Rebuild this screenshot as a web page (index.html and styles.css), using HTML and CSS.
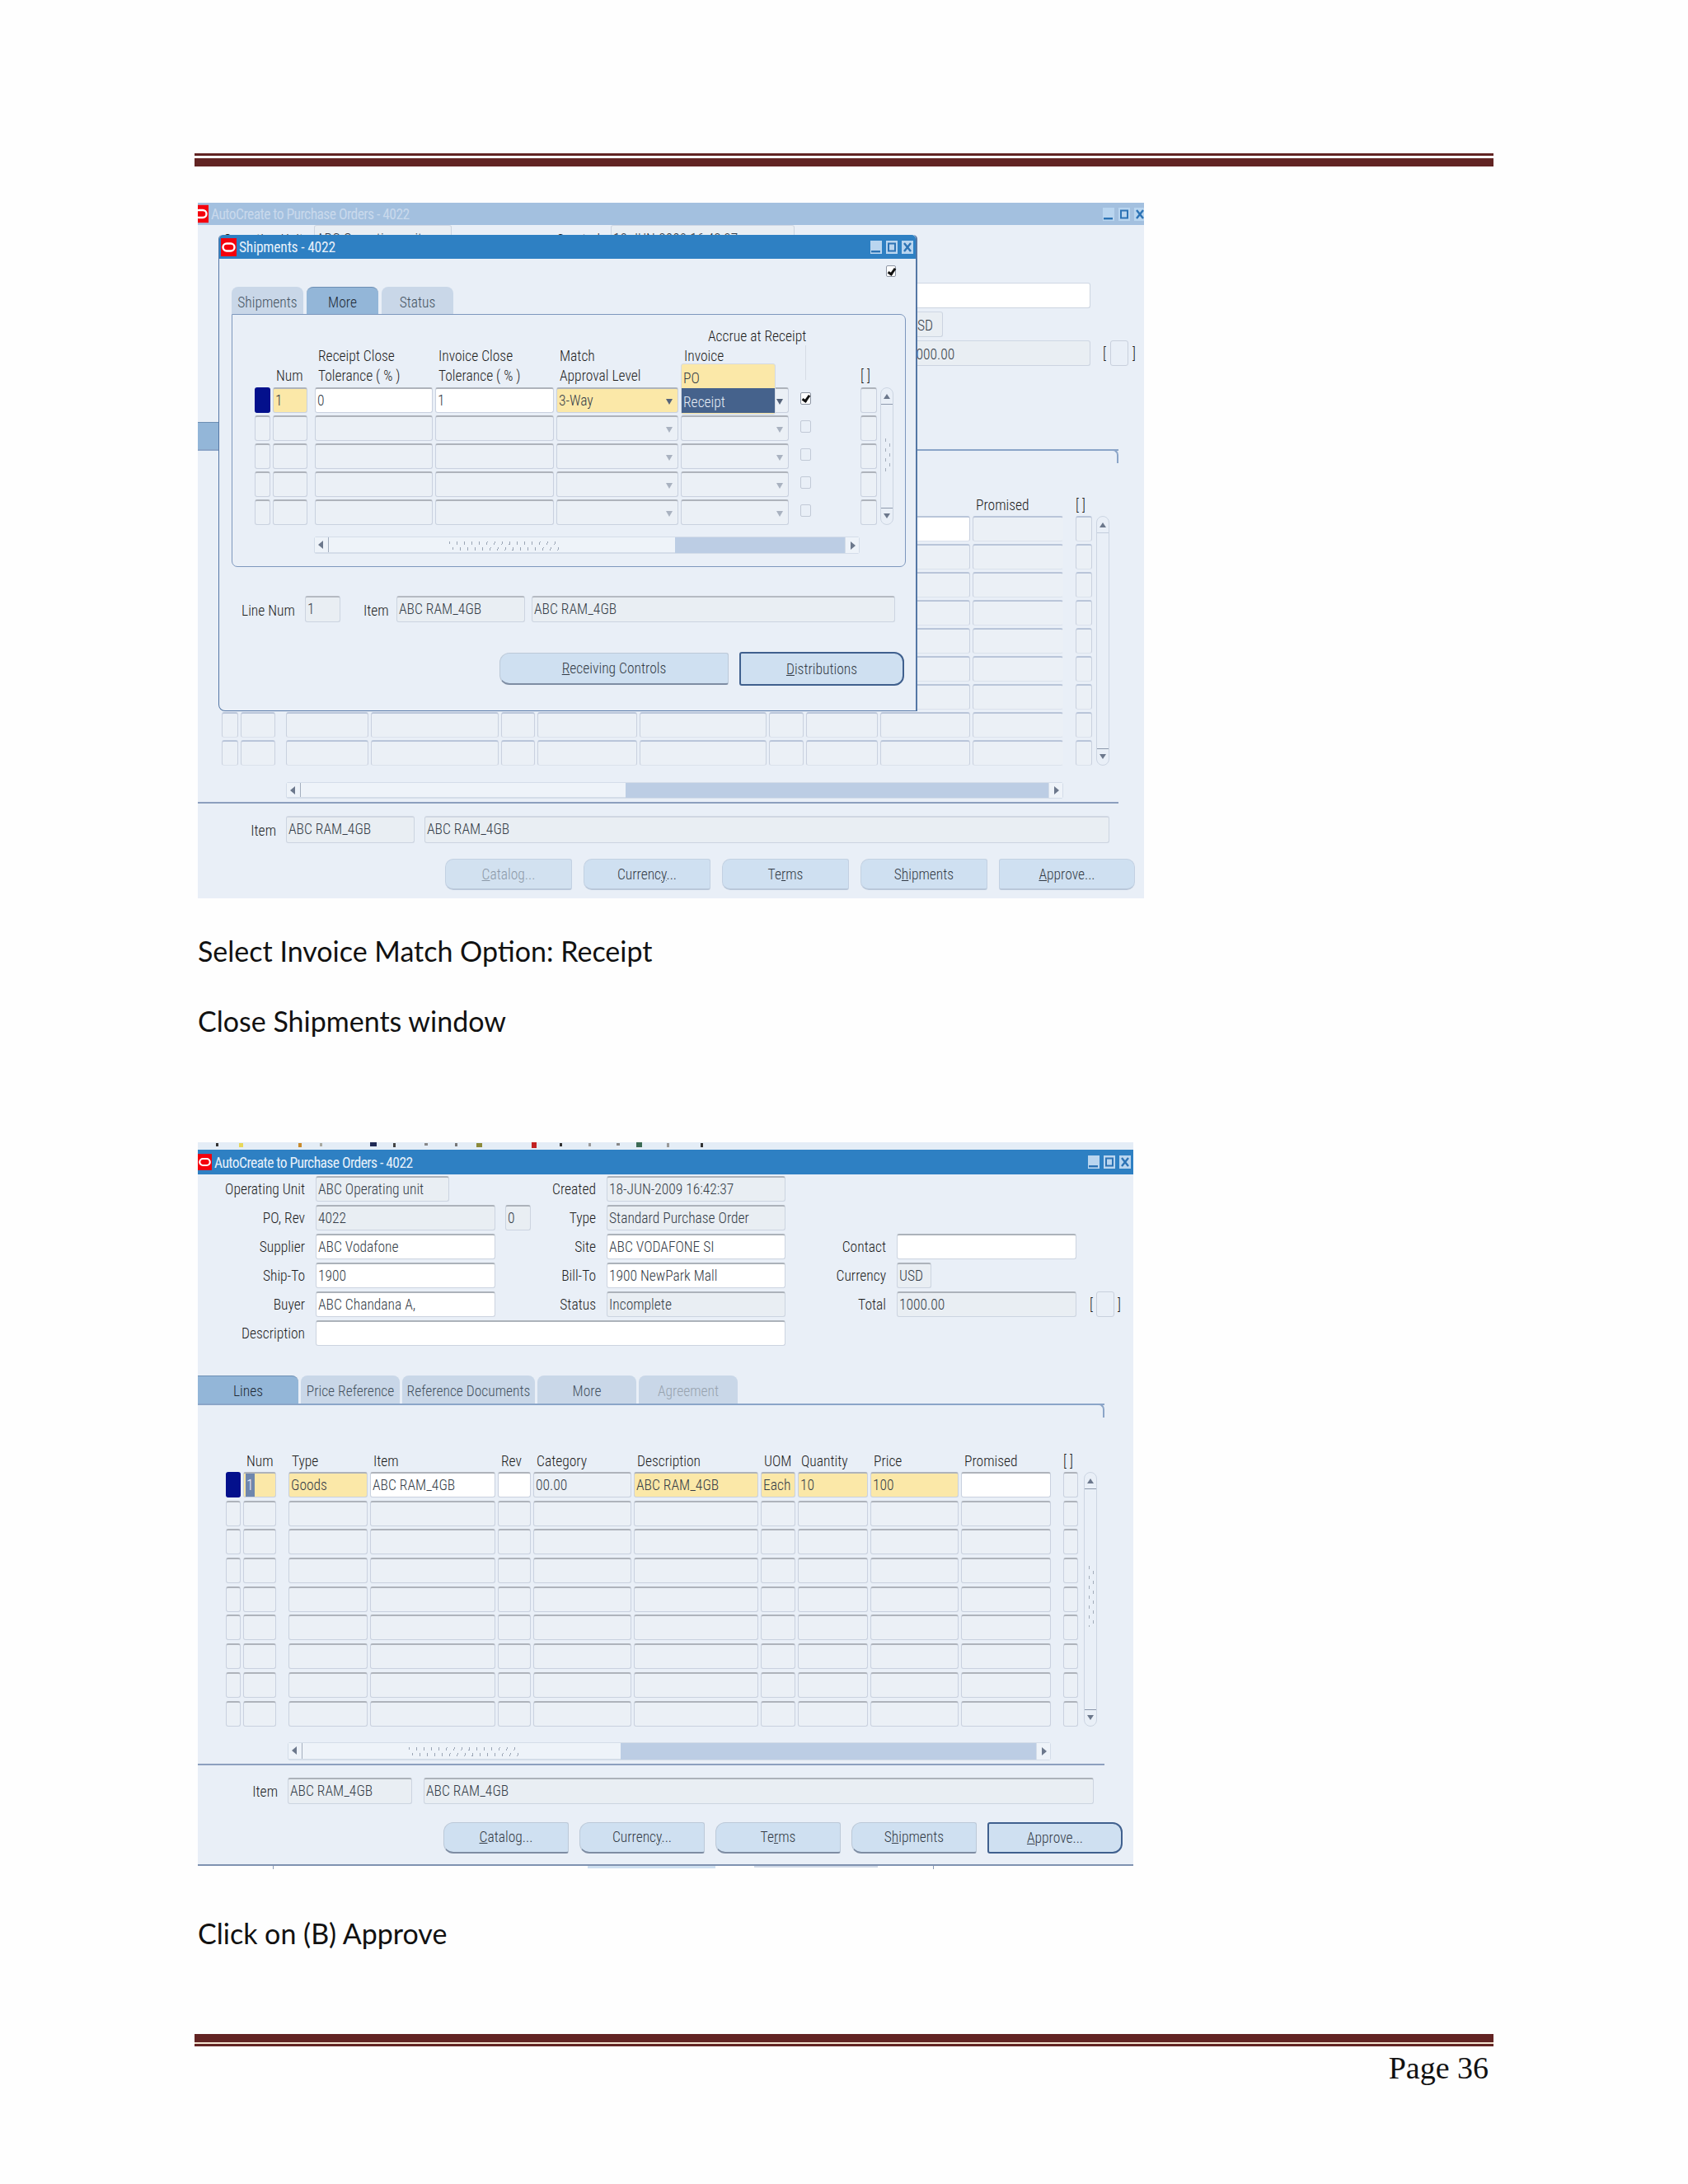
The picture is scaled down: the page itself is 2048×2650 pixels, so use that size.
FILE: index.html
```html
<!DOCTYPE html>
<html lang="en">
<head>
    <meta charset="UTF-8">
    <title>Page 36</title>
    <link rel="stylesheet" href="styles.css">
</head>
<body>
<svg class="defs" width="0" height="0">
    <symbol id="ora" viewBox="0 0 19 22">
        <rect width="19" height="22" fill="#f4000c"/>
        <rect x="2.5" y="6.5" width="14" height="9" rx="4.5" fill="none" stroke="#fff" stroke-width="2.4"/>
    </symbol>
    <symbol id="win-min" viewBox="0 0 14 16">
        <rect width="14" height="16" fill="#b9d5ef"/>
        <rect x="1" y="12" width="11" height="2.4" fill="#2c73b5"/>
    </symbol>
    <symbol id="win-max" viewBox="0 0 14 16">
        <rect width="14" height="16" fill="#b9d5ef"/>
        <rect x="3" y="3.5" width="8" height="9" fill="none" stroke="#2c73b5" stroke-width="2"/>
    </symbol>
    <symbol id="win-close" viewBox="0 0 14 16">
        <rect width="14" height="16" fill="#b9d5ef"/>
        <path d="M3 3 L11 13 M11 3 L3 13" stroke="#2c73b5" stroke-width="2.4"/>
    </symbol>
</svg>

<div class="page">
    <div class="rule rule-top"><div class="thin"></div><div class="thick"></div></div>

    <!-- first screenshot: shipments dialog over the PO window -->
    <div class="shot shot-one">
        <div class="titlebar faded">
            <svg class="logo-cut" viewBox="6 0 13 22"><use href="#ora" width="19" height="22"/></svg>
            <span class="title-text">AutoCreate to Purchase Orders - 4022</span>
            <div class="win-btns">
                <svg class="wbtn"><use href="#win-min"/></svg>
                <svg class="wbtn"><use href="#win-max"/></svg>
                <svg class="wbtn"><use href="#win-close"/></svg>
            </div>
        </div>

        <div class="form form-back">
            <label class="c1">Operating Unit</label>
            <div class="field ro c2 short">ABC Operating unit</div>
            <label class="c4">Created</label>
            <div class="field ro c5">18-JUN-2009 16:42:37</div>

            <div class="field ro c2"></div>
            <div class="field ro c5"></div>

            <div class="field white c2"></div>
            <div class="field white c5"></div>
            <div class="field white c7"></div>

            <div class="field white c2"></div>
            <div class="field white c5"></div>
            <div class="field ro c7 tiny">USD</div>

            <div class="field white c2"></div>
            <div class="field ro c5"></div>
            <div class="field ro c7">1000.00</div>
            <div class="bracket c8">[<span class="box"></span>]</div>

            <div class="field white c2 span-desc"></div>
        </div>

        <div class="tabs tabs-back">
            <div class="tab active lines-tab"></div>
        </div>
        <div class="panel panel-back">
            <div class="thead back-cols">
                <span></span><span></span><span></span><span></span><span></span><span></span><span></span><span></span><span></span><span></span>
                <span>Promised</span>
                <span class="th-end">[ ]</span>
            </div>
            <div class="table-wrap">
                <div class="cells back-cols">
                    <span class="cell"></span><span class="cell"></span><span class="cell"></span><span class="cell"></span><span class="cell"></span><span class="cell"></span><span class="cell"></span><span class="cell"></span><span class="cell"></span><span class="cell white"></span><span class="cell"></span><span class="cell"></span>
                    <span class="cell"></span><span class="cell"></span><span class="cell"></span><span class="cell"></span><span class="cell"></span><span class="cell"></span><span class="cell"></span><span class="cell"></span><span class="cell"></span><span class="cell"></span><span class="cell"></span><span class="cell"></span>
                    <span class="cell"></span><span class="cell"></span><span class="cell"></span><span class="cell"></span><span class="cell"></span><span class="cell"></span><span class="cell"></span><span class="cell"></span><span class="cell"></span><span class="cell"></span><span class="cell"></span><span class="cell"></span>
                    <span class="cell"></span><span class="cell"></span><span class="cell"></span><span class="cell"></span><span class="cell"></span><span class="cell"></span><span class="cell"></span><span class="cell"></span><span class="cell"></span><span class="cell"></span><span class="cell"></span><span class="cell"></span>
                    <span class="cell"></span><span class="cell"></span><span class="cell"></span><span class="cell"></span><span class="cell"></span><span class="cell"></span><span class="cell"></span><span class="cell"></span><span class="cell"></span><span class="cell"></span><span class="cell"></span><span class="cell"></span>
                    <span class="cell"></span><span class="cell"></span><span class="cell"></span><span class="cell"></span><span class="cell"></span><span class="cell"></span><span class="cell"></span><span class="cell"></span><span class="cell"></span><span class="cell"></span><span class="cell"></span><span class="cell"></span>
                    <span class="cell"></span><span class="cell"></span><span class="cell"></span><span class="cell"></span><span class="cell"></span><span class="cell"></span><span class="cell"></span><span class="cell"></span><span class="cell"></span><span class="cell"></span><span class="cell"></span><span class="cell"></span>
                    <span class="cell"></span><span class="cell"></span><span class="cell"></span><span class="cell"></span><span class="cell"></span><span class="cell"></span><span class="cell"></span><span class="cell"></span><span class="cell"></span><span class="cell"></span><span class="cell"></span><span class="cell"></span>
                    <span class="cell"></span><span class="cell"></span><span class="cell"></span><span class="cell"></span><span class="cell"></span><span class="cell"></span><span class="cell"></span><span class="cell"></span><span class="cell"></span><span class="cell"></span><span class="cell"></span><span class="cell"></span>
                </div>
                <div class="vscroll vscroll-back">
                    <span class="arr-up"></span>
                    <span class="arr-down"></span>
                </div>
            </div>
            <div class="hscroll hscroll-back">
                <div class="thumb"><span class="arr-left"></span></div>
                <span class="arr-right"></span>
            </div>
        </div>

        <div class="item-row item-back">
            <label>Item</label>
            <div class="field ro">ABC RAM_4GB</div>
            <div class="field ro">ABC RAM_4GB</div>
        </div>
        <div class="btn-row btns-back">
            <button class="btn pale off"><u>C</u>atalog...</button>
            <button class="btn pale">Currenc<u>y</u>...</button>
            <button class="btn pale">Te<u>r</u>ms</button>
            <button class="btn pale">S<u>h</u>ipments</button>
            <button class="btn pale wide"><u>A</u>pprove...</button>
        </div>

        <div class="dialog">
            <div class="titlebar dlg-title">
                <svg class="logo"><use href="#ora"/></svg>
                <span class="title-text">Shipments - 4022</span>
                <div class="win-btns">
                    <svg class="wbtn"><use href="#win-min"/></svg>
                    <svg class="wbtn"><use href="#win-max"/></svg>
                    <svg class="wbtn"><use href="#win-close"/></svg>
                </div>
            </div>
            <div class="dlg-body">
                <div class="dlg-check"><span class="check on"></span></div>
                <div class="tabs tabs-dlg">
                    <div class="tab">Shipments</div>
                    <div class="tab active">More</div>
                    <div class="tab">Status</div>
                </div>
                <div class="panel panel-dlg">
                    <div class="thead dlg-cols">
                        <span></span>
                        <span>Num</span>
                        <span>Receipt Close<br>Tolerance ( % )</span>
                        <span>Invoice Close<br>Tolerance ( % )</span>
                        <span>Match<br>Approval Level</span>
                        <span><span class="accrue">Accrue at Receipt</span><br>Invoice<br>&nbsp;</span>
                        <span class="chk-rule"></span>
                        <span class="th-last">[ ]</span>
                    </div>
                    <div class="table-wrap">
                        <div class="cells dlg-cols">
                            <span class="cell navy"></span><span class="cell yellow">1</span><span class="cell white">0</span><span class="cell white">1</span><span class="cell yellow combo">3-Way</span><span class="cell combo"></span><span class="chk-cell"><span class="check on"></span></span><span class="cell"></span>
                            <span class="cell"></span><span class="cell"></span><span class="cell"></span><span class="cell"></span><span class="cell combo dim"></span><span class="cell combo dim"></span><span class="chk-cell"><span class="check"></span></span><span class="cell"></span>
                            <span class="cell"></span><span class="cell"></span><span class="cell"></span><span class="cell"></span><span class="cell combo dim"></span><span class="cell combo dim"></span><span class="chk-cell"><span class="check"></span></span><span class="cell"></span>
                            <span class="cell"></span><span class="cell"></span><span class="cell"></span><span class="cell"></span><span class="cell combo dim"></span><span class="cell combo dim"></span><span class="chk-cell"><span class="check"></span></span><span class="cell"></span>
                            <span class="cell"></span><span class="cell"></span><span class="cell"></span><span class="cell"></span><span class="cell combo dim"></span><span class="cell combo dim"></span><span class="chk-cell"><span class="check"></span></span><span class="cell"></span>
                        </div>
                        <div class="vscroll vscroll-dlg">
                            <span class="arr-up"></span>
                            <span class="grip-v"></span>
                            <span class="arr-down"></span>
                        </div>
                    </div>
                    <div class="hscroll hscroll-dlg">
                        <div class="thumb"><span class="arr-left"></span><span class="grip"></span></div>
                        <span class="arr-right"></span>
                    </div>
                    <div class="popup">
                        <div class="popup-item">PO</div>
                        <div class="popup-item picked">Receipt</div>
                    </div>
                </div>
                <div class="line-row">
                    <label>Line Num</label>
                    <div class="field ro line-num">1</div>
                    <label class="line-item">Item</label>
                    <div class="field ro line-code">ABC RAM_4GB</div>
                    <div class="field ro line-desc">ABC RAM_4GB</div>
                </div>
                <div class="btn-row btns-dlg">
                    <button class="btn recv"><u>R</u>eceiving Controls</button>
                    <button class="btn dist default"><u>D</u>istributions</button>
                </div>
            </div>
        </div>
    </div>

    <p class="caption cap-one">Select Invoice Match Option: Receipt</p>
    <p class="caption cap-two">Close Shipments window</p>

    <!-- second screenshot: PO window -->
    <div class="shot shot-two">
        <svg class="toolbar-bits" viewBox="0 0 1135 9">
            <rect x="22" y="1" width="3" height="4" fill="#333"/>
            <rect x="50" y="1" width="5" height="5" fill="#e8d85a"/>
            <rect x="122" y="1" width="4" height="5" fill="#c98a2b"/>
            <rect x="148" y="1" width="3" height="4" fill="#a9a9a0"/>
            <rect x="209" y="0" width="8" height="5" fill="#1f2a55"/>
            <rect x="237" y="1" width="3" height="5" fill="#444"/>
            <rect x="275" y="1" width="4" height="3" fill="#888"/>
            <rect x="312" y="1" width="3" height="4" fill="#777"/>
            <rect x="338" y="1" width="7" height="5" fill="#8c8a3a"/>
            <rect x="405" y="0" width="6" height="7" fill="#c22222"/>
            <rect x="439" y="1" width="3" height="4" fill="#333"/>
            <rect x="474" y="1" width="3" height="4" fill="#999"/>
            <rect x="508" y="1" width="4" height="3" fill="#888"/>
            <rect x="532" y="0" width="7" height="6" fill="#3d6b55"/>
            <rect x="569" y="1" width="3" height="5" fill="#999"/>
            <rect x="610" y="1" width="3" height="5" fill="#333"/>
        </svg>
        <div class="titlebar main-title">
            <svg class="logo"><use href="#ora"/></svg>
            <span class="title-text">AutoCreate to Purchase Orders - 4022</span>
            <div class="win-btns">
                <svg class="wbtn"><use href="#win-min"/></svg>
                <svg class="wbtn"><use href="#win-max"/></svg>
                <svg class="wbtn"><use href="#win-close"/></svg>
            </div>
        </div>

        <div class="form">
            <label class="c1">Operating Unit</label>
            <div class="field ro c2 short">ABC Operating unit</div>
            <label class="c4">Created</label>
            <div class="field ro c5">18-JUN-2009 16:42:37</div>

            <label class="c1">PO, Rev</label>
            <div class="field ro c2">4022</div>
            <div class="field ro c3">0</div>
            <label class="c4">Type</label>
            <div class="field ro c5">Standard Purchase Order</div>

            <label class="c1">Supplier</label>
            <div class="field white c2">ABC Vodafone</div>
            <label class="c4">Site</label>
            <div class="field white c5">ABC VODAFONE SI</div>
            <label class="c6">Contact</label>
            <div class="field white c7"></div>

            <label class="c1">Ship-To</label>
            <div class="field white c2">1900</div>
            <label class="c4">Bill-To</label>
            <div class="field white c5">1900 NewPark Mall</div>
            <label class="c6">Currency</label>
            <div class="field ro c7 tiny">USD</div>

            <label class="c1">Buyer</label>
            <div class="field white c2">ABC Chandana A,</div>
            <label class="c4">Status</label>
            <div class="field ro c5">Incomplete</div>
            <label class="c6">Total</label>
            <div class="field ro c7">1000.00</div>
            <div class="bracket c8">[<span class="box"></span>]</div>

            <label class="c1">Description</label>
            <div class="field white c2 span-desc"></div>
        </div>

        <div class="tabs tabs-main">
            <div class="tab active">Lines</div>
            <div class="tab">Price Reference</div>
            <div class="tab">Reference Documents</div>
            <div class="tab">More</div>
            <div class="tab off">Agreement</div>
        </div>
        <div class="panel panel-main">
            <div class="thead main-cols">
                <span></span>
                <span>Num</span>
                <span>Type</span>
                <span>Item</span>
                <span>Rev</span>
                <span>Category</span>
                <span>Description</span>
                <span>UOM</span>
                <span>Quantity</span>
                <span>Price</span>
                <span>Promised</span>
                <span class="th-end">[ ]</span>
            </div>
            <div class="table-wrap">
                <div class="cells main-cols">
                    <span class="cell navy"></span><span class="cell yellow"><span class="sel">1</span></span><span class="cell yellow">Goods</span><span class="cell white">ABC RAM_4GB</span><span class="cell white"></span><span class="cell">00.00</span><span class="cell yellow">ABC RAM_4GB</span><span class="cell yellow">Each</span><span class="cell yellow">10</span><span class="cell yellow">100</span><span class="cell white"></span><span class="cell"></span>
                    <span class="cell"></span><span class="cell"></span><span class="cell"></span><span class="cell"></span><span class="cell"></span><span class="cell"></span><span class="cell"></span><span class="cell"></span><span class="cell"></span><span class="cell"></span><span class="cell"></span><span class="cell"></span>
                    <span class="cell"></span><span class="cell"></span><span class="cell"></span><span class="cell"></span><span class="cell"></span><span class="cell"></span><span class="cell"></span><span class="cell"></span><span class="cell"></span><span class="cell"></span><span class="cell"></span><span class="cell"></span>
                    <span class="cell"></span><span class="cell"></span><span class="cell"></span><span class="cell"></span><span class="cell"></span><span class="cell"></span><span class="cell"></span><span class="cell"></span><span class="cell"></span><span class="cell"></span><span class="cell"></span><span class="cell"></span>
                    <span class="cell"></span><span class="cell"></span><span class="cell"></span><span class="cell"></span><span class="cell"></span><span class="cell"></span><span class="cell"></span><span class="cell"></span><span class="cell"></span><span class="cell"></span><span class="cell"></span><span class="cell"></span>
                    <span class="cell"></span><span class="cell"></span><span class="cell"></span><span class="cell"></span><span class="cell"></span><span class="cell"></span><span class="cell"></span><span class="cell"></span><span class="cell"></span><span class="cell"></span><span class="cell"></span><span class="cell"></span>
                    <span class="cell"></span><span class="cell"></span><span class="cell"></span><span class="cell"></span><span class="cell"></span><span class="cell"></span><span class="cell"></span><span class="cell"></span><span class="cell"></span><span class="cell"></span><span class="cell"></span><span class="cell"></span>
                    <span class="cell"></span><span class="cell"></span><span class="cell"></span><span class="cell"></span><span class="cell"></span><span class="cell"></span><span class="cell"></span><span class="cell"></span><span class="cell"></span><span class="cell"></span><span class="cell"></span><span class="cell"></span>
                    <span class="cell"></span><span class="cell"></span><span class="cell"></span><span class="cell"></span><span class="cell"></span><span class="cell"></span><span class="cell"></span><span class="cell"></span><span class="cell"></span><span class="cell"></span><span class="cell"></span><span class="cell"></span>
                </div>
                <div class="vscroll vscroll-main">
                    <span class="arr-up"></span>
                    <span class="grip-v"></span>
                    <span class="arr-down"></span>
                </div>
            </div>
            <div class="hscroll hscroll-main">
                <div class="thumb"><span class="arr-left"></span><span class="grip"></span></div>
                <span class="arr-right"></span>
            </div>
        </div>

        <div class="item-row item-main">
            <label>Item</label>
            <div class="field ro">ABC RAM_4GB</div>
            <div class="field ro">ABC RAM_4GB</div>
        </div>
        <div class="btn-row btns-main">
            <button class="btn"><u>C</u>atalog...</button>
            <button class="btn">Currenc<u>y</u>...</button>
            <button class="btn">Te<u>r</u>ms</button>
            <button class="btn">S<u>h</u>ipments</button>
            <button class="btn default"><u>A</u>pprove...</button>
        </div>
    </div>
    <svg class="shot-bits" viewBox="0 0 1135 4">
        <rect x="91" y="0" width="1" height="4" fill="#8b9bb5"/>
        <rect x="473" y="0" width="155" height="3" fill="#cfe0f1"/>
        <rect x="675" y="0" width="150" height="2" fill="#cfd8e6"/>
        <rect x="892" y="0" width="1" height="4" fill="#8b9bb5"/>
    </svg>

    <p class="caption cap-three">Click on (B) Approve</p>

    <div class="rule rule-bottom"><div class="thick"></div><div class="thin"></div></div>
    <div class="page-num">Page 36</div>
</div>
</body>
</html>
```

FILE: styles.css
```css
html, body {
    margin: 0;
    padding: 0;
    background-color: #fefefe;
}

.defs {
    position: absolute;
}

.page {
    width: 1576px;
    margin-left: 236px;
    height: 2650px;
    overflow: hidden;
}

/* header / footer rules */
.rule-top {
    margin-top: 186px;
}

.thin {
    height: 3px;
    background-color: #622423;
}

.thick {
    height: 10px;
    background-color: #622423;
}

.rule-top .thin {
    margin-bottom: 3px;
}

.rule-bottom {
    margin-top: 100px;
}

.rule-bottom .thick {
    margin-bottom: 2px;
    box-shadow: 0 2px 0 #f5e6d3;
}

.page-num {
    margin-top: 3px;
    padding-right: 6px;
    text-align: right;
    font-family: "Liberation Serif", serif;
    font-size: 38px;
    line-height: 46px;
    color: #111;
}

.caption {
    margin: 0;
    font-family: Lato, sans-serif;
    font-size: 34px;
    line-height: 44px;
    color: #111;
}

.cap-one { margin-top: 42px; margin-left: 4px; }
.cap-two { margin-top: 41px; margin-left: 4px; }
.cap-three { margin-top: 56px; margin-left: 4px; }

/* screenshots */
.shot {
    position: relative;
    margin-left: 4px;
    background-color: #e9eff7;
    font-family: Roboto, sans-serif;
    font-stretch: 75%;
    font-weight: 300;
    font-size: 17.5px;
    color: #1c1c1c;
    overflow: hidden;
}

.shot-one {
    width: 1148px;
    height: 844px;
    margin-top: 44px;
}

.shot-two {
    box-sizing: border-box;
    width: 1135px;
    height: 878px;
    margin-top: 125px;
    border-bottom: 2px solid #7f92b0;
}

.shot-bits {
    display: block;
    width: 1135px;
    height: 4px;
    margin-left: 4px;
}

.toolbar-bits {
    display: block;
    width: 1135px;
    height: 9px;
    background-color: #e4edf6;
}

.titlebar {
    display: flex;
    align-items: center;
    background-color: #2e80c3;
    color: #e8f1fa;
    font-weight: 400;
}

.titlebar.faded {
    height: 27px;
    background-color: #a3c0df;
    color: #c9d9ec;
}

.main-title {
    height: 30px;
}

.dlg-title {
    height: 29px;
    padding-left: 2px;
    border-radius: 5px 5px 0 0;
}

.logo {
    width: 19px;
    height: 22px;
    flex: none;
}

.main-title .logo {
    width: 17px;
    height: 20px;
}

.logo-cut {
    width: 13px;
    height: 23px;
    flex: none;
}

.title-text {
    margin-left: 3px;
    padding-top: 1px;
    white-space: nowrap;
}

.main-title .title-text,
.faded .title-text {
    letter-spacing: -0.55px;
}

.dlg-title .title-text {
    letter-spacing: -0.2px;
}

.win-btns {
    display: flex;
    gap: 5px;
    margin-left: auto;
    margin-right: 3px;
}

.wbtn {
    width: 14px;
    height: 16px;
}

.faded .win-btns {
    margin-right: -2px;
}

/* header forms */
.form {
    display: grid;
    grid-template-columns: 130px 231px 43px 79px 230px 122px 231px 1fr;
    grid-auto-rows: 31px;
    row-gap: 4px;
    margin-top: 2px;
}

.form-back {
    grid-template-columns: 128px 234px 43px 83px 236px 123px 236px 1fr;
    margin-top: 0;
}

.form label {
    text-align: right;
    line-height: 33px;
    white-space: nowrap;
}

.form .field {
    margin-left: 13px;
}

.form .c3 {
    margin-left: 12px;
}

.c1 { grid-column: 1; }
.c2 { grid-column: 2; }
.c3 { grid-column: 3; }
.c4 { grid-column: 4; }
.c5 { grid-column: 5; }
.c6 { grid-column: 6; }
.c7 { grid-column: 7; }
.c8 { grid-column: 8; }

.span-desc {
    grid-column: 2 / 6;
}

.short { width: 162px; }
.tiny { width: 42px; }

.field {
    box-sizing: border-box;
    height: 31px;
    padding-left: 2px;
    border: 1px solid #ccd4e0;
    border-top: 2px solid #acb2ba;
    border-radius: 3px;
    line-height: 28px;
    white-space: nowrap;
    overflow: hidden;
    color: #333b46;
}

.field.ro {
    background-color: #e9eef3;
}

.field.white {
    background-color: #fff;
}

/* the back window's fields are washed out and their first row is mostly hidden */
.form-back label {
    line-height: 37px;
}

.form-back .field {
    border-top: 1px solid #cfd7e4;
    line-height: 33px;
}

.form-back .short { width: 167px; }
.form-back .tiny { width: 44px; }

.bracket {
    display: flex;
    align-items: center;
    gap: 4px;
    margin-left: 16px;
}

.form-back .bracket {
    margin-left: 15px;
    gap: 5px;
}

.box {
    display: block;
    width: 20px;
    height: 29px;
    border: 1px solid #c8d0dd;
    border-radius: 3px;
}

/* tabs */
.tabs {
    display: flex;
}

.tab {
    box-sizing: border-box;
    display: flex;
    align-items: center;
    justify-content: center;
    height: 34px;
    padding-top: 3px;
    background-color: #c9d7e8;
    border-radius: 8px 8px 0 0;
    color: #44525f;
    white-space: nowrap;
}

.tab.active {
    background-color: #93b6d8;
    border-top: 1px solid #6d8fb4;
    color: #1f2a36;
}

.tab.off {
    color: #98a3af;
}

.tabs-main {
    gap: 3px;
    margin-top: 36px;
}

.tabs-main .tab { width: 120px; }
.tabs-main .tab:nth-child(1) { width: 122px; border-top-left-radius: 0; }
.tabs-main .tab:nth-child(3) { width: 161px; }

.tabs-back {
    margin-top: 33px;
}

.lines-tab {
    width: 122px;
    height: 33px;
    border-top-left-radius: 0;
}

.tabs-dlg {
    gap: 4px;
    margin-top: 12px;
}

.tabs-dlg .tab {
    width: 87px;
    height: 33px;
    padding-top: 4px;
}

/* panels */
.panel-main,
.panel-back {
    position: relative;
    border-top: 2px solid #8ba5c8;
    border-bottom: 2px solid #8c9fbe;
}

.panel-main {
    width: 1100px;
    padding-left: 34px;
    padding-bottom: 4px;
    box-sizing: border-box;
}

.panel-back {
    width: 1117px;
    padding-left: 29px;
    padding-bottom: 4px;
    box-sizing: border-box;
}

.panel-main::after,
.panel-back::after {
    content: "";
    position: absolute;
    right: 0;
    top: -2px;
    width: 8px;
    height: 15px;
    border-top: 2px solid #8ba5c8;
    border-right: 2px solid #8ba5c8;
    border-top-right-radius: 7px;
    background-color: #e9eff7;
}

.panel-dlg {
    position: relative;
    box-sizing: border-box;
    width: 818px;
    height: 307px;
    padding: 14px 0 0 27px;
    border: 1px solid #7d97bd;
    border-radius: 0 7px 7px 7px;
}

.thead {
    display: grid;
    align-items: end;
    line-height: 24px;
    white-space: nowrap;
}

.panel-dlg .thead {
    padding-bottom: 2px;
}

.thead > span {
    padding-left: 4px;
}

.panel-main .thead {
    height: 80px;
    padding-bottom: 1px;
}

.panel-back .thead {
    height: 78px;
    padding-bottom: 1px;
}

.accrue {
    display: inline-block;
    margin-left: 29px;
}

.chk-rule {
    display: block;
    align-self: end;
    width: 1px;
    height: 42px;
    margin-left: 17px;
    margin-bottom: 7px;
    padding: 0 !important;
    background-color: #d6dce5;
}

/* column tracks */
.main-cols {
    grid-template-columns: 18px 40px 108px 152px 40px 119px 151px 42px 85px 107px 109px 30px;
    column-gap: 3px;
}

.back-cols {
    grid-template-columns: 20px 42px 110px 155px 41px 121px 154px 42px 87px 109px 110px 32px;
    column-gap: 3px;
}

.dlg-cols {
    grid-template-columns: 19px 42px 149px 144px 148px 131px 81px 20px;
    column-gap: 3px;
}

.main-cols > :nth-child(12n+3),
.back-cols > :nth-child(12n+3) {
    margin-left: 12px;
}

.back-cols > :nth-child(12n+3) {
    margin-left: 10px;
}

.main-cols > :nth-child(12n),
.back-cols > :nth-child(12n) {
    margin-left: 12px;
}

.dlg-cols > :nth-child(8n+3) {
    margin-left: 6px;
}

.th-end,
.th-last {
    padding-left: 0 !important;
}

.table-wrap {
    display: flex;
}

.cells {
    display: grid;
    grid-auto-rows: 31px;
}

.panel-main .cells { row-gap: 3.7px; }
.panel-back .cells { row-gap: 3px; }
.panel-dlg .cells { row-gap: 3px; }

.cell {
    position: relative;
    box-sizing: border-box;
    display: block;
    padding-left: 2px;
    border: 1px solid #c9d1df;
    border-top: 2px solid #aeb3bb;
    border-radius: 3px;
    background-color: #ebf0f6;
    line-height: 28px;
    white-space: nowrap;
    overflow: hidden;
    color: #333b46;
}

.panel-back .cell {
    border-top-color: #b9c5d9;
    border-bottom-color: #dbe2ec;
}

.panel-back .cell:nth-child(12n+11) {
    border-right-color: transparent;
}

.cell.white { background-color: #fff; }
.cell.yellow { background-color: #fbe8a8; }

.cell.navy {
    background-color: #03108c;
    border-color: #03108c;
}

.sel {
    display: inline-block;
    padding: 0 1px;
    background-color: #6f87ad;
    color: #eef;
}

.combo::after {
    content: "";
    position: absolute;
    right: 6px;
    top: 12px;
    border-left: 4px solid transparent;
    border-right: 4px solid transparent;
    border-top: 7px solid #55637a;
}

.combo.dim::after {
    border-top-color: #a9b2c0;
}

.chk-cell {
    display: block;
    padding: 6px 0 0 11px;
}

.check {
    position: relative;
    box-sizing: border-box;
    display: block;
    width: 13px;
    height: 15px;
    border: 1px solid #c1c9d6;
    border-radius: 2px;
}

.check.on {
    border-color: #8d95a3;
    background-color: #fff;
}

.check.on::after {
    content: "";
    position: absolute;
    left: 3px;
    top: 1px;
    width: 3px;
    height: 7px;
    border-right: 3px solid #111;
    border-bottom: 3px solid #111;
    transform: rotate(35deg);
}

.dlg-check {
    display: flex;
    justify-content: flex-end;
    padding-top: 8px;
    padding-right: 24px;
}

.dlg-check .check {
    width: 12px;
    height: 14px;
}

/* scrollbars */
.vscroll {
    position: relative;
    box-sizing: border-box;
    width: 16px;
    margin-left: 7px;
    border: 1px solid #ccd5e2;
    border-radius: 8px;
}

.vscroll-back {
    margin-left: 5px;
}

.vscroll-dlg {
    margin-left: 4px;
}

.arr-up,
.arr-down {
    position: absolute;
    left: 0;
    right: 0;
    height: 19px;
}

.arr-up {
    top: 0;
    border-bottom: 1px solid #8d99ac;
}

.arr-down {
    bottom: 0;
    border-top: 1px solid #8d99ac;
}

.arr-up::after,
.arr-down::after {
    content: "";
    position: absolute;
    left: 3px;
    border-left: 4px solid transparent;
    border-right: 4px solid transparent;
}

.arr-up::after {
    top: 7px;
    border-bottom: 6px solid #6c788c;
}

.arr-down::after {
    top: 6px;
    border-top: 6px solid #6c788c;
}

.vscroll-back .arr-up {
    border-bottom-color: #c3cddd;
}

.grip-v {
    position: absolute;
    left: 2px;
    right: 2px;
    top: 37%;
    height: 24%;
    background-image:
        linear-gradient(#a3adbb 4px, transparent 4px),
        linear-gradient(#a3adbb 4px, transparent 4px);
    background-size: 1px 12px, 1px 12px;
    background-position: 3px 0, 8px 6px;
    background-repeat: repeat-y;
}

.hscroll {
    position: relative;
    box-sizing: border-box;
    display: flex;
    background-color: #bccde4;
    border: 1px solid #d4dde9;
    border-radius: 3px;
}

.hscroll-main {
    width: 926px;
    height: 22px;
    margin-top: 19px;
    margin-left: 75px;
}

.hscroll-back {
    width: 943px;
    height: 20px;
    margin-top: 20px;
    margin-left: 78px;
}

.hscroll-dlg {
    width: 662px;
    height: 21px;
    margin-top: 14px;
    margin-left: 72px;
}

.thumb {
    position: relative;
    box-sizing: border-box;
    height: 100%;
    background-color: #eef3f9;
    border-bottom: 1px solid #d4dde9;
}

.hscroll-main .thumb { width: 403px; }
.hscroll-back .thumb { width: 411px; }
.hscroll-dlg .thumb { width: 437px; }

.arr-left,
.arr-right {
    position: absolute;
    top: 0;
    bottom: 0;
    width: 16px;
}

.arr-left {
    left: 0;
    border-right: 1px solid #a4afbf;
}

.arr-right {
    right: 0;
    background-color: #eef3f9;
    border-left: 1px solid #d4dde9;
}

.arr-left::after,
.arr-right::after {
    content: "";
    position: absolute;
    top: 50%;
    margin-top: -5px;
    border-top: 5px solid transparent;
    border-bottom: 5px solid transparent;
}

.arr-left::after {
    left: 4px;
    border-right: 6px solid #6c788c;
}

.arr-right::after {
    left: 6px;
    border-left: 6px solid #6c788c;
}

.grip {
    position: absolute;
    top: 5px;
    height: 11px;
    background-image:
        repeating-linear-gradient(100deg, #9aa5b5 0 1px, transparent 1px 9px),
        repeating-linear-gradient(100deg, #9aa5b5 0 1px, transparent 1px 9px);
    background-size: 100% 4px, 100% 4px;
    background-position: 0 0, 4px 7px;
    background-repeat: no-repeat;
}

.hscroll-main .grip { left: 146px; width: 134px; }
.hscroll-dlg .grip { left: 163px; width: 134px; }

/* combo popup */
.popup {
    position: absolute;
    left: 544px;
    top: 59px;
    box-sizing: border-box;
    width: 115px;
    height: 62px;
    background-color: #fbe8a8;
    border: 1px solid #d3d9e3;
    border-radius: 3px;
}

.popup-item {
    height: 29px;
    padding-left: 2px;
    line-height: 35px;
    color: #333b46;
}

.popup-item.picked {
    height: 30px;
    line-height: 34px;
    background-color: #45628c;
    color: #e6edf6;
}

/* item rows */
.item-row {
    display: flex;
    align-items: center;
}

.item-row label {
    text-align: right;
    padding-top: 3px;
}

.item-main {
    margin-top: 15px;
}

.item-main label { width: 97px; margin-right: 12px; }
.item-main .field { height: 32px; }
.item-main .field:nth-child(2) { width: 151px; margin-right: 14px; }
.item-main .field:nth-child(3) { width: 813px; }

.item-back {
    margin-top: 15px;
}

.item-back label { width: 95px; margin-right: 12px; }
.item-back .field { height: 33px; border-top-color: #d0d7e2; line-height: 28px; }
.item-back .field:nth-child(2) { width: 156px; margin-right: 12px; }
.item-back .field:nth-child(3) { width: 831px; }

/* buttons */
.btn-row {
    display: flex;
}

.btn {
    box-sizing: border-box;
    height: 38px;
    padding: 0;
    background-color: #cfe0f1;
    border: 1px solid #bcc9d8;
    border-bottom: 2px solid #7e8da3;
    border-radius: 12px 3px 3px 12px;
    font: inherit;
    font-stretch: 75%;
    color: #333b46;
}

.btn.pale {
    border-color: #c3d1e2;
    border-radius: 10px 3px 3px 10px;
}

.btn.wide {
    border-radius: 3px 10px 10px 3px;
}

.btn.off {
    color: #8c99a8;
    background-color: #d2e1f0;
}

.btn.default {
    border: 2px solid #40608e;
    border-radius: 3px 12px 12px 3px;
}

.btns-main {
    gap: 13px;
    margin-top: 22px;
    margin-left: 298px;
}

.btns-main .btn { width: 152px; }
.btns-main .btn.default { width: 164px; }

.btns-back {
    gap: 14px;
    margin-top: 19px;
    margin-left: 300px;
}

.btns-back .btn { width: 154px; border-bottom-color: #bac8da; }
.btns-back .btn.wide { width: 165px; }

/* dialog on top of the PO window */
.dialog {
    position: absolute;
    left: 25px;
    top: 39px;
    box-sizing: border-box;
    width: 848px;
    height: 578px;
    background-color: #e9eff7;
    border: 1px solid #5577a5;
    border-right-width: 2px;
    border-top: 0;
    border-radius: 5px 5px 0 8px;
}

.dlg-body {
    padding-left: 15px;
}

.line-row {
    display: flex;
    align-items: center;
    gap: 12px;
    margin-top: 35px;
    margin-left: 12px;
}

.line-row .field {
    height: 32px;
    border-top-color: #b5bac2;
    line-height: 29px;
}

.line-row label {
    width: 65px;
    padding-top: 3px;
    white-space: nowrap;
}

.line-row .line-item {
    width: 28px;
    margin-left: 16px;
}

.line-num { width: 43px; }
.line-code { width: 156px; }
.line-desc { width: 441px; margin-left: -4px; }

.btns-dlg {
    gap: 13px;
    justify-content: flex-end;
    margin-top: 37px;
    padding-right: 14px;
}

.btn.recv {
    width: 278px;
    height: 39px;
}

.btn.dist {
    width: 200px;
    height: 41px;
    margin-top: -1px;
}
```
